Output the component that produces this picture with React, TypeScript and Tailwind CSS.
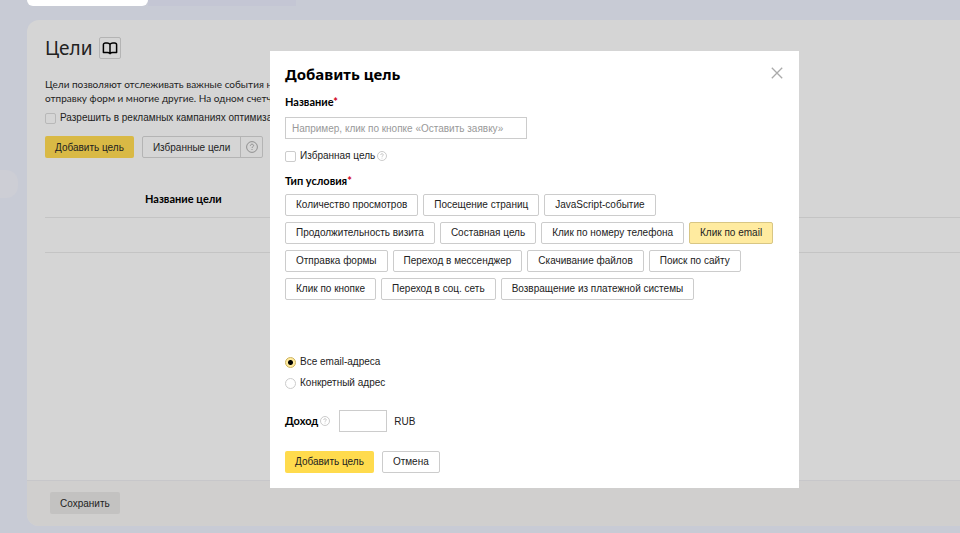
import { useState } from "react";

const CONDITIONS = [
  "Количество просмотров",
  "Посещение страниц",
  "JavaScript-событие",
  "Продолжительность визита",
  "Составная цель",
  "Клик по номеру телефона",
  "Клик по email",
  "Отправка формы",
  "Переход в мессенджер",
  "Скачивание файлов",
  "Поиск по сайту",
  "Клик по кнопке",
  "Переход в соц. сеть",
  "Возвращение из платежной системы",
];

function HelpIcon({ className }: { className: string }) {
  return (
    <svg viewBox="0 0 12 12" className={className} fill="none" stroke="currentColor" aria-hidden="true">
      <circle cx="6" cy="6" r="5.4" strokeWidth="0.9" />
      <path d="M4.4 4.8c0-1 .7-1.6 1.6-1.6s1.6.6 1.6 1.4c0 1.1-1.6 1.2-1.6 2.4M6 8v1" strokeWidth="0.9" />
    </svg>
  );
}

function BookIcon() {
  return (
    <svg viewBox="0 0 16 13" className="h-[13px] w-4" fill="none" stroke="currentColor" strokeWidth="1.5" strokeLinejoin="round" aria-hidden="true">
      <path d="M8 2.4C7.4 1.5 6.5 1 5.2 1H3.4C2.2 1 1.4 1.7 1.4 2.8v7.8h4c1.2 0 2 .3 2.6 1 .6-.7 1.4-1 2.6-1h4V2.8C14.6 1.7 13.8 1 12.6 1h-1.8C9.5 1 8.6 1.5 8 2.4Zm0 0v9" />
    </svg>
  );
}

/** Goals page that sits behind the dialog, in its dimmed colours. */
function GoalsPage() {
  return (
    <div className="flex min-h-screen bg-[#c8cbd5] pb-[7px]">
      <aside className="w-[27px] shrink-0 pt-[170px]">
        <div className="h-7 w-[18px] rounded-r-xl bg-[#cdced5]" />
      </aside>
      <div className="flex min-w-0 flex-1 flex-col">
        <div className="mb-3.5 flex h-1.5">
          <div className="w-[121px] rounded-b-lg bg-white" />
          <div className="w-[148px] bg-[#c4c6d4]" />
        </div>

        <main className="flex flex-1 flex-col overflow-hidden rounded-l-xl bg-[#d5d5d5] text-[#222]">
          <div className="flex-1 pt-4 pl-[18px]">
            <div className="flex items-center gap-[7px]">
              <h1 className="font-['Noto_Sans',sans-serif] text-[19px] leading-6">Цели</h1>
              <button type="button" aria-label="Справка" className="flex size-[22px] items-center justify-center rounded-xs border border-[#b4b4b4] text-black">
                <BookIcon />
              </button>
            </div>

            <p className="mt-[17px] font-['Lato',sans-serif] text-[10px] leading-[14px] whitespace-nowrap">
              Цели позволяют отслеживать важные события на
              <br />
              отправку форм и многие другие. На одном счетчике
            </p>

            <label className="mt-1.5 flex items-center gap-1 leading-[14px] whitespace-nowrap">
              <input type="checkbox" className="size-[11px] appearance-none rounded-xs border border-[#b8b8b8]" />
              Разрешить в рекламных кампаниях оптимизацию
            </label>

            <div className="mt-[11px] flex gap-2">
              <button type="button" className="h-[22px] rounded-xs bg-[#d9b945] px-2.5">
                Добавить цель
              </button>
              <div className="flex h-[22px] rounded-xs border border-[#b4b4b4]">
                <button type="button" className="px-2.5">
                  Избранные цели
                </button>
                <button type="button" aria-label="Об избранных целях" className="flex w-[22px] items-center justify-center border-l border-[#b4b4b4] text-[#888]">
                  <HelpIcon className="size-3" />
                </button>
              </div>
            </div>

            <table className="mt-[23px] w-full border-collapse text-left">
              <thead>
                <tr className="h-9 border-b border-[#c4c4c4]">
                  <th className="pl-[100px] font-['Lato',sans-serif] text-[11px] font-bold text-black">Название цели</th>
                </tr>
              </thead>
              <tbody>
                <tr className="h-[35px] border-b border-[#c4c4c4]">
                  <td />
                </tr>
              </tbody>
            </table>
          </div>

          <footer className="border-t border-[#c7c7ca] bg-[#d0cfce] px-[23px] pt-[11px] pb-3">
            <button type="button" className="h-[22px] rounded-xs bg-[#c3c2c1] px-2.5">
              Сохранить
            </button>
          </footer>
        </main>
      </div>
    </div>
  );
}

function AddGoalDialog() {
  const [condition, setCondition] = useState("Клик по email");
  const [scope, setScope] = useState("all");

  const labelClass = "font-['Lato',sans-serif] text-[11px] leading-[14px] font-bold text-black";
  const radioClass =
    "size-[11px] appearance-none rounded-full border border-[#ccc] bg-white checked:border-[#cdb25c] checked:bg-[radial-gradient(circle,#000_0_2px,#ffeba0_3px)]";

  return (
    <div role="dialog" aria-labelledby="dialog-title" className="w-[529px] bg-white px-[15px] pt-[13px] pb-[15px] text-[#222]">
      <div className="flex items-start justify-between">
        <h2 id="dialog-title" className="font-['Noto_Sans',sans-serif] text-[15px] leading-5 font-bold text-black">
          Добавить цель
        </h2>
        <button type="button" aria-label="Закрыть" className="mt-[3px] mr-px text-[#aaa]">
          <svg viewBox="0 0 12 12" className="size-3" stroke="currentColor" strokeWidth="1.3" aria-hidden="true">
            <path d="M.8.8l10.4 10.4M11.2.8.8 11.2" />
          </svg>
        </button>
      </div>

      <label htmlFor="goal-name" className={`${labelClass} mt-[11px] block`}>
        Название<span className="text-[#d00020]">*</span>
      </label>
      <input
        id="goal-name"
        type="text"
        placeholder="Например, клик по кнопке «Оставить заявку»"
        className="mt-2 block h-[22px] w-[242px] border border-[#ccc] px-1.5 placeholder:text-[#999]"
      />

      <div className="mt-2.5 flex items-center gap-0.5 leading-[14px]">
        <label className="flex items-center gap-1">
          <input type="checkbox" className="size-[11px] appearance-none rounded-xs border border-[#ccc]" />
          Избранная цель
        </label>
        <HelpIcon className="size-2.5 text-[#bbb]" />
      </div>

      <fieldset className="mt-[11px]">
        <legend className={labelClass}>
          Тип условия<span className="text-[#d00020]">*</span>
        </legend>
        <div className="mt-1.5 flex flex-wrap gap-x-[5px] gap-y-1.5">
          {CONDITIONS.map((name) => (
            <button
              key={name}
              type="button"
              aria-pressed={name === condition}
              onClick={() => setCondition(name)}
              className={`h-[22px] rounded-xs border px-2.5 pb-0.5 ${
                name === condition ? "border-[#d8c684] bg-[#ffeba0]" : "border-[#ccc] bg-white"
              }`}
            >
              {name}
            </button>
          ))}
        </div>
      </fieldset>

      <div className="mt-[55px] flex flex-col items-start gap-[7px] leading-[14px]">
        <label className="flex items-center gap-1">
          <input type="radio" name="scope" checked={scope === "all"} onChange={() => setScope("all")} className={radioClass} />
          Все email-адреса
        </label>
        <label className="flex items-center gap-1">
          <input type="radio" name="scope" checked={scope === "one"} onChange={() => setScope("one")} className={radioClass} />
          Конкретный адрес
        </label>
      </div>

      <div className="mt-5 flex items-center">
        <label htmlFor="revenue" className={labelClass}>
          Доход
        </label>
        <HelpIcon className="ml-0.5 size-2.5 text-[#bbb]" />
        <input id="revenue" type="text" className="mr-[7px] ml-[9px] h-[22px] w-12 border border-[#ccc] px-1" />
        RUB
      </div>

      <div className="mt-[19px] flex gap-2">
        <button type="button" className="h-[22px] rounded-xs bg-[#ffdb4d] px-2.5 pb-0.5">
          Добавить цель
        </button>
        <button type="button" className="h-[22px] rounded-xs border border-[#ccc] px-2.5 pb-0.5">
          Отмена
        </button>
      </div>
    </div>
  );
}

export default function App() {
  return (
    <div className="relative font-['Liberation_Sans',Arial,sans-serif] text-[10px]">
      <GoalsPage />
      <div className="absolute inset-0 flex items-start justify-center pt-[51px] pl-[109px]">
        <AddGoalDialog />
      </div>
    </div>
  );
}
